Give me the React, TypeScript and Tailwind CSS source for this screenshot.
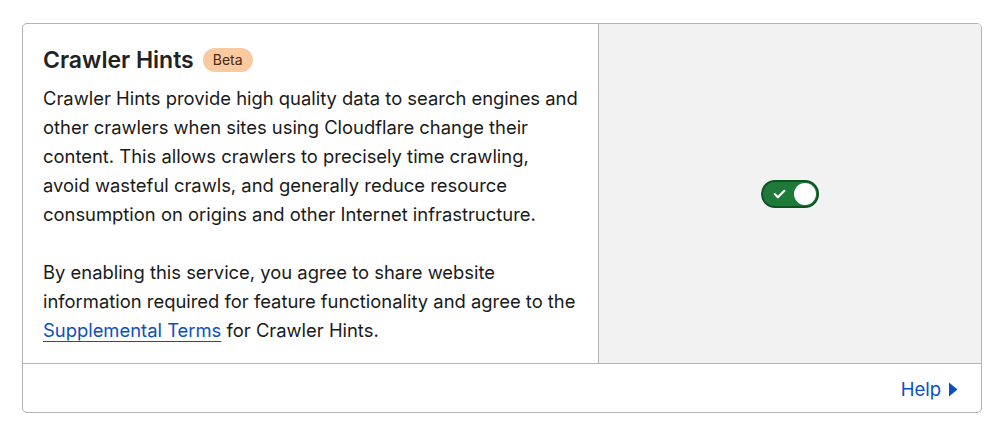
import React from 'react';

const Toggle = ({ on }: { on: boolean }) => (
  <button
    className={`relative w-[58px] h-[28px] rounded-full border-2 border-[#0d5224] ${on ? 'bg-[#1f7a3a]' : 'bg-gray-300'} flex items-center`}
    aria-pressed={on}
  >
    <svg width="15" height="15" viewBox="0 0 14 14" className="absolute left-[9px] top-[4px]" fill="none" stroke="white" strokeWidth="2" strokeLinecap="round" strokeLinejoin="round">
      <path d="M2.5 7.5l3 3 6-6" />
    </svg>
    <span className="absolute right-[1px] top-[1px] w-[22px] h-[22px] rounded-full bg-white" />
  </button>
);

export default function App() {
  return (
    <div className="min-h-screen bg-white pl-[22px] pt-[23px]" style={{ fontFamily: 'Inter, "Noto Sans", sans-serif' }}>
      <div className="w-[960px] border border-[#b3b3b3] rounded-[5px] overflow-hidden">
        <div className="flex h-[340px] border-b border-[#b3b3b3]">
          {/* Description */}
          <div className="w-[576px] border-r border-[#b3b3b3] pl-[20px] pt-[21px] text-[#1a1a1a]">
            <div className="flex items-center gap-[9px]">
              <h2 className="text-[23px] leading-[30px] font-semibold text-[#222]">Crawler Hints</h2>
              <span className="bg-[#f9c9a0] text-[#4a2a10] text-[14px] leading-[24px] px-[10px] rounded-full">Beta</span>
            </div>
            <p className="mt-[9px] text-[18.4px] leading-[29px] whitespace-nowrap">
              Crawler Hints provide high quality data to search engines and<br />
              other crawlers when sites using Cloudflare change their<br />
              content. This allows crawlers to precisely time crawling,<br />
              avoid wasteful crawls, and generally reduce resource<br />
              consumption on origins and other Internet infrastructure.
            </p>
            <p className="mt-[29px] text-[18.4px] leading-[29px] whitespace-nowrap">
              By enabling this service, you agree to share website<br />
              information required for feature functionality and agree to the<br />
              <a href="#" className="text-[#0b4fc4] underline underline-offset-[4px] decoration-[1px]">Supplemental Terms</a> for Crawler Hints.
            </p>
          </div>
          {/* Control */}
          <div className="flex-1 bg-[#f2f2f2] flex items-center justify-center">
            <Toggle on={true} />
          </div>
        </div>
        <div className="h-[48px] flex items-center justify-end pr-[23px] pt-[3px]">
          <a href="#" className="flex items-center gap-[7px] text-[#0b4fc4] text-[18.5px]">
            Help
            <svg width="10" height="15" viewBox="0 0 10 15" fill="currentColor">
              <path d="M1 0.5 L9.5 7.5 L1 14.5 Z" />
            </svg>
          </a>
        </div>
      </div>
    </div>
  );
}
